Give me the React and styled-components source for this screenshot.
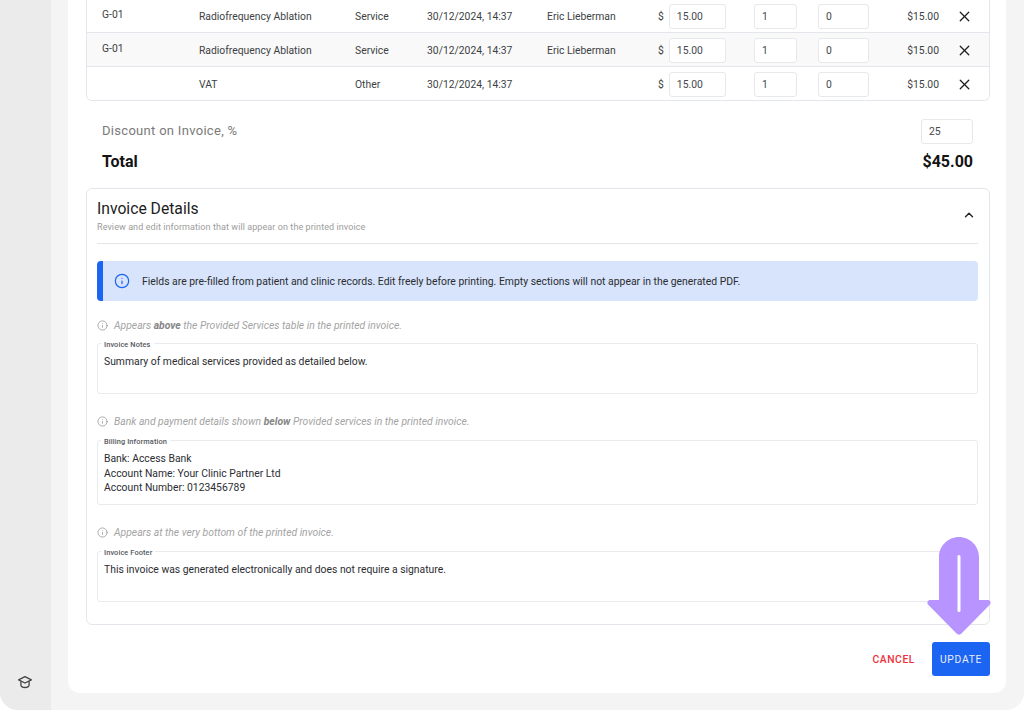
import React from "react";
import styled, { createGlobalStyle } from "styled-components";
import { X, ChevronUp, Info } from "lucide-react";

const GlobalStyle = createGlobalStyle`
  html, body {
    margin: 0;
    padding: 0;
    background: #fff;
    font-family: Roboto, "Liberation Sans", sans-serif;
    overflow: hidden;
  }
  * {
    box-sizing: border-box;
  }
`;

const Frame = styled.div`
  position: relative;
  display: flex;
  width: 1024px;
  height: 710px;
  overflow: hidden;
  border-radius: 0 0 18px 18px;
  background: #f4f4f4;
`;

const Sidebar = styled.aside`
  width: 51px;
  flex: none;
  display: flex;
  flex-direction: column;
  justify-content: flex-end;
  align-items: center;
  padding: 0 1px 20px 0;
  background: #ebebeb;
  color: #444;
`;

const Main = styled.main`
  flex: 1;
  padding: 0 18px 17px 17px;
  min-width: 0;
`;

const Card = styled.div`
  height: 100%;
  padding: 0 16px 17px 18px;
  background: #fff;
  border-radius: 0 0 12px 12px;
  overflow: hidden;
`;

const Table = styled.div`
  margin-top: -1px;
  border: 1px solid #e3e7ec;
  border-top: none;
  border-radius: 0 0 6px 6px;
  overflow: hidden;
`;

const Row = styled.div`
  display: grid;
  grid-template-columns: 97px 156px 72px 120px 111px 96px 64px 60px 61px 1fr;
  align-items: center;
  height: 34px;
  padding: 1px 0 0 15px;
  font-size: 10.35px;
  color: #3c3f44;
  background: ${(props) => (props.$shaded ? "#f9f9f9" : "#fff")};
  border-bottom: 1px solid #e3e7ec;
  &:last-child {
    height: 33px;
    border-bottom: none;
  }
`;

const CodeCell = styled.div`
  margin-top: -3px;
`;

const PriceCell = styled.div`
  display: flex;
  align-items: center;
  gap: 5px;
`;

const NumberInput = styled.div`
  display: flex;
  align-items: center;
  width: ${(props) => props.$width}px;
  height: 25px;
  padding-left: 7px;
  font-size: 10.35px;
  color: #45484c;
  background: #fff;
  border: 1px solid #e6e8ec;
  border-radius: 3px;
`;

const AmountCell = styled.div`
  text-align: right;
`;

const RemoveCell = styled.div`
  display: flex;
  justify-content: flex-end;
  padding-right: 16px;
  color: #1d1d1f;
`;

const DiscountRow = styled.div`
  display: flex;
  align-items: center;
  justify-content: space-between;
  height: 26px;
  margin-top: 17px;
  padding: 0 17px 0 16px;
`;

const DiscountLabel = styled.div`
  margin-top: -1px;
  font-size: 13px;
  letter-spacing: 0.3px;
  color: #7a7a7a;
`;

const TotalRow = styled.div`
  display: flex;
  align-items: center;
  justify-content: space-between;
  height: 20px;
  margin-top: 7px;
  padding: 0 17px 0 16px;
  font-size: 16px;
  font-weight: 700;
  color: #141414;
`;

const Details = styled.section`
  margin-top: 17px;
  padding: 0 11px 22px 10px;
  border: 1px solid #e3e7ec;
  border-radius: 6px;
`;

const DetailsHeader = styled.header`
  display: flex;
  justify-content: space-between;
  height: 55px;
  padding-top: 10px;
  border-bottom: 1px solid #e3e5e8;
`;

const DetailsTitle = styled.h2`
  margin: 0;
  font-size: 15.7px;
  line-height: 19px;
  font-weight: 400;
  color: #1c1c1c;
`;

const DetailsSub = styled.p`
  margin: 3px 0 0;
  font-size: 9px;
  line-height: 12px;
  letter-spacing: 0.08px;
  color: #9c9c9c;
`;

const Collapse = styled.div`
  padding: 8px 2px 0 0;
  color: #222;
`;

const Alert = styled.div`
  display: flex;
  align-items: center;
  gap: 12px;
  height: 40px;
  margin-top: 17px;
  padding-left: 11px;
  font-size: 10.4px;
  color: #2b2d31;
  background: #d7e4fb;
  border-left: 6px solid #1c64f2;
  border-radius: 4px;
`;

const AlertIcon = styled(Info)`
  color: #1c64f2;
  flex: none;
`;

const Hint = styled.div`
  display: flex;
  align-items: center;
  gap: 6px;
  height: 14px;
  margin-top: ${(props) => props.$top}px;
  margin-bottom: ${(props) => props.$bottom}px;
  font-size: 10.35px;
  font-style: italic;
  color: #a3a3a3;
  b {
    color: #858585;
    font-weight: 700;
  }
`;

const HintIcon = styled(Info)`
  color: #909090;
  flex: none;
`;

const Field = styled.div`
  position: relative;
  height: ${(props) => props.$height}px;
  padding: 11px 6px 0;
  font-size: 10.36px;
  line-height: 14.6px;
  white-space: pre-line;
  color: #2b2d31;
  border: 1px solid #e8eaed;
  border-radius: 3px;
`;

const FieldLabel = styled.span`
  position: absolute;
  top: -4px;
  left: 3px;
  padding: 0 3px;
  font-size: 7.4px;
  line-height: 9px;
  font-weight: 500;
  letter-spacing: 0.1px;
  color: #55585c;
  background: #fff;
`;

const Actions = styled.div`
  display: flex;
  justify-content: flex-end;
  align-items: center;
  gap: 17px;
  margin-top: 17px;
`;

const CancelButton = styled.button`
  padding: 0;
  border: none;
  background: none;
  font: 500 10.3px Roboto, sans-serif;
  letter-spacing: 0.6px;
  color: #f0303a;
`;

const UpdateButton = styled.button`
  width: 58px;
  height: 34px;
  padding: 0;
  border: none;
  border-radius: 3px;
  background: #1c64f2;
  font: 400 10.3px Roboto, sans-serif;
  letter-spacing: 0.7px;
  color: #e6eeff;
`;

const Pointer = styled.svg`
  position: absolute;
  left: 925px;
  top: 535px;
`;

const rows = [
  { code: "G-01", name: "Radiofrequency Ablation", type: "Service", person: "Eric Lieberman" },
  { code: "G-01", name: "Radiofrequency Ablation", type: "Service", person: "Eric Lieberman", shaded: true },
  { code: "", name: "VAT", type: "Other", person: "" },
];

const CapIcon = () => (
  <svg width="16" height="16" viewBox="0 0 16 16" fill="none" stroke="currentColor" strokeWidth="1.3" strokeLinejoin="round">
    <path d="M8 2.6 1.6 5.8 8 9l6.4-3.2z" />
    <path d="M3.9 7.2v3.6c0 1.6 1.9 2.7 4.1 2.7s4.1-1.1 4.1-2.7V7.2" />
  </svg>
);

const App = () => {
  return (
    <Frame>
      <GlobalStyle />
      <Sidebar>
        <CapIcon />
      </Sidebar>
      <Main>
        <Card>
          <Table>
            {rows.map((row, index) => (
              <Row key={index} $shaded={row.shaded}>
                <CodeCell>{row.code}</CodeCell>
                <div>{row.name}</div>
                <div>{row.type}</div>
                <div>30/12/2024, 14:37</div>
                <div>{row.person}</div>
                <PriceCell>
                  $<NumberInput $width={57}>15.00</NumberInput>
                </PriceCell>
                <NumberInput $width={43}>1</NumberInput>
                <NumberInput $width={51}>0</NumberInput>
                <AmountCell>$15.00</AmountCell>
                <RemoveCell>
                  <X size={17} strokeWidth={1.8} />
                </RemoveCell>
              </Row>
            ))}
          </Table>

          <DiscountRow>
            <DiscountLabel>Discount on Invoice, %</DiscountLabel>
            <NumberInput $width={52}>25</NumberInput>
          </DiscountRow>
          <TotalRow>
            <span>Total</span>
            <span>$45.00</span>
          </TotalRow>

          <Details>
            <DetailsHeader>
              <div>
                <DetailsTitle>Invoice Details</DetailsTitle>
                <DetailsSub>Review and edit information that will appear on the printed invoice</DetailsSub>
              </div>
              <Collapse>
                <ChevronUp size={14} strokeWidth={2.4} />
              </Collapse>
            </DetailsHeader>

            <Alert>
              <AlertIcon size={16} strokeWidth={1.8} />
              Fields are pre-filled from patient and clinic records. Edit freely before printing. Empty sections will not appear in the generated PDF.
            </Alert>

            <Hint $top={17} $bottom={11}>
              <HintIcon size={11} strokeWidth={1.6} />
              <span>Appears <b>above</b> the Provided Services table in the printed invoice.</span>
            </Hint>
            <Field $height={51}>
              <FieldLabel>Invoice Notes</FieldLabel>
              Summary of medical services provided as detailed below.
            </Field>

            <Hint $top={20} $bottom={12}>
              <HintIcon size={11} strokeWidth={1.6} />
              <span>Bank and payment details shown <b>below</b> Provided services in the printed invoice.</span>
            </Hint>
            <Field $height={65}>
              <FieldLabel>Billing Information</FieldLabel>
              {"Bank: Access Bank\nAccount Name: Your Clinic Partner Ltd\nAccount Number: 0123456789"}
            </Field>

            <Hint $top={20} $bottom={12}>
              <HintIcon size={11} strokeWidth={1.6} />
              <span>Appears at the very bottom of the printed invoice.</span>
            </Hint>
            <Field $height={51}>
              <FieldLabel>Invoice Footer</FieldLabel>
              This invoice was generated electronically and does not require a signature.
            </Field>
          </Details>

          <Actions>
            <CancelButton>CANCEL</CancelButton>
            <UpdateButton>UPDATE</UpdateButton>
          </Actions>
        </Card>
      </Main>

      <Pointer width="68" height="102" viewBox="0 0 68 102">
        <path
          d="M34 2C23 2 14 11 14 22V65H5C3 65 1.5 67.5 3 69.5L31.5 98.5C33 100 35 100 36.5 98.5L65 69.5C66.5 67.5 65 65 63 65H54V22C54 11 45 2 34 2Z"
          fill="#b794ff"
        />
        <rect x="32.5" y="20" width="3" height="57" rx="1.5" fill="#fff" />
      </Pointer>
    </Frame>
  );
};

export default App;
